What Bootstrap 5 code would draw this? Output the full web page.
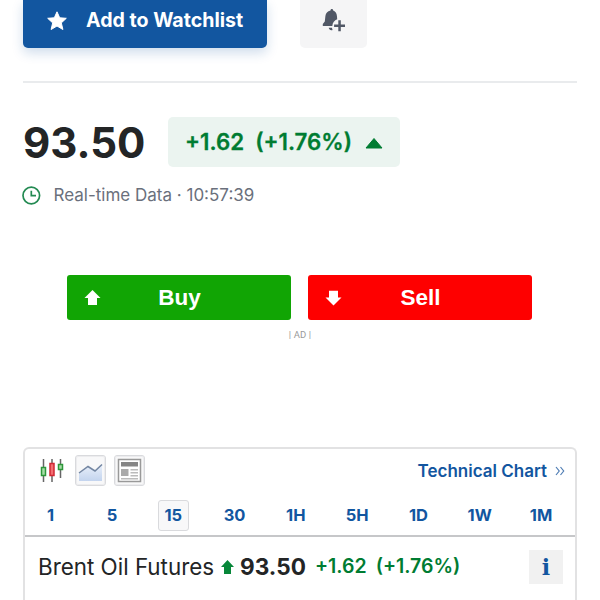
<!DOCTYPE html>
<html lang="en">
<head>
<meta charset="utf-8">
<meta name="viewport" content="width=device-width, initial-scale=1">
<title>Brent Oil Futures</title>
<link href="https://cdn.jsdelivr.net/npm/bootstrap@5.3.0/dist/css/bootstrap.min.css" rel="stylesheet">
<style>
body{font-family:Inter,"Liberation Sans",sans-serif;color:#232526;background:#fff;height:600px;overflow:hidden;line-height:1}
svg{display:block;flex:none}
.page-wrap{padding:0 23px}
.actions{height:48px;gap:33px}
.watch-btn{width:244px;border-radius:0 0 5px 5px;background:#1256a0;color:#fff;font-weight:700;font-size:19.6px;padding:0 0 7px 24px;box-shadow:0 5px 12px #1256a033}
.watch-btn span{margin-left:19px}
.bell-btn{width:67px;border-radius:0 0 5px 5px;background:#f5f5f6;padding:0 0 6px}
.divider{margin-top:33px;height:2px;background:#e9ebed}
.price-row{margin-top:34px;height:50px}
.last-price{font-size:42px;font-weight:700;width:145px;padding-top:1px}
.change-pill{width:232px;height:50px;border-radius:5px;background:#ebf4f0;color:#007c32;font-size:22.3px;font-weight:600;padding:1px 0 0 17px}
.change-pill span{-webkit-text-stroke:.3px #007c32}
.change-pill svg{margin:0 17px 0 13px}
.stamp{margin-top:18px;height:20px;font-size:17px;color:#6a707c}
.stamp svg{margin-left:-1px}
.stamp span{margin-left:12.5px}
.trade-row{margin-top:70px;gap:17px;padding:0 45px 0 44px}
.trade-btn{height:45px;border-radius:3px;color:#fff;font:700 22.5px "Liberation Sans",sans-serif;padding-left:17px}
.trade-btn span{padding:1px 33px 0 0}
.buy{background:#11a504}.sell{background:#fe0000}
.ad-label{margin-top:10px;height:10px;font:9.5px/10px Roboto,sans-serif;letter-spacing:.15px;color:#999}
.chart-box{margin-top:107px;height:170px;border:2px solid #e2e2e3;border-radius:6px 6px 0 0;border-bottom:0}
.tool-row{height:43px;padding:0 10px 0 10.5px}
.tool-icon{width:31px;height:31px;border:1px solid #d9dadd;outline:1px solid #ececee;outline-offset:-2px;border-radius:3px;background:#f8f8f9}
.tech{color:#1256a0;font-weight:600;font-size:17px;padding-top:1px}
.ranges{height:45px;padding-top:3px;color:#1256a0;font-size:16.5px;font-weight:700;border-bottom:2px solid #c6c7c9}
.range{width:61.3px;height:31px;flex:none}
.range:first-child{margin-left:-5px}
.range-on{width:31px;height:31px;border:1px solid #d9dadd;border-radius:3px;background:#f8f8f9}
.quote{height:60px;padding:0 12px 0 13px}
.quote-name{font-size:22.4px;width:183px}
.quote-last{font-size:22.6px;font-weight:700;margin-left:6px;width:75px}
.quote-chg{font-size:19.5px;font-weight:600;color:#007c32}
.quote-chg + .quote-chg{margin-left:9px}
.info{width:34px;height:34px;background:#f1f1f1;color:#1256a0;font:700 22px "DejaVu Serif",serif}
</style>
<script src="https://cdn.jsdelivr.net/npm/bootstrap@5.3.0/dist/js/bootstrap.bundle.min.js"></script>
</head>
<body>
<main class="page-wrap">
 <div class="actions d-flex">
  <button class="watch-btn border-0 d-flex align-items-center" type="button">
   <svg width="20" height="20" viewBox="0 0 20 20"><path d="M10 .8 12.7 6.8 19.3 7.3 14.3 11.9 15.9 18.5 10 15 4.1 18.5 5.7 11.9.7 7.3 7.3 6.8Z" fill="#fff" stroke="#fff" stroke-width="1" stroke-linejoin="round"/></svg>
   <span class="text-nowrap">Add to Watchlist</span>
  </button>
  <button class="bell-btn border-0 d-flex align-items-center justify-content-center" type="button" aria-label="Create alert">
   <svg width="24" height="24" viewBox="0 0 24 24" fill="#515866"><path d="M8.500 1.400c0-2 2.500-2 2.700 0 2.600 1 3.600 3 3.800 6.200l.2 2.700C12.400 11.300 10.600 13.500 10.300 17H.8v-2l2-2.500.6-5.500c.4-3 2-5 5.100-5.600ZM6.700 18.800h3.200l.7 2.200c-2 .8-3.500-.3-3.900-2.200Z"/><path d="M16.300 11.300h2.500v4.200H23V18h-4.200v4.200h-2.500V18h-4.200v-2.500h4.200Z"/></svg>
  </button>
 </div>
 <div class="divider"></div>
 <div class="price-row d-flex align-items-center">
  <div class="last-price">93.50</div>
  <div class="change-pill d-flex align-items-center"><span>+1.62</span><span class="ms-auto">(+1.76%)</span>
   <svg width="18" height="12" viewBox="0 0 18 12"><path d="M1 11 9 1.500 17 11Z" fill="#007c32" stroke="#007c32" stroke-linejoin="round"/></svg></div>
 </div>
 <div class="stamp d-flex align-items-center">
  <svg width="19" height="19" viewBox="0 0 19 19" fill="none" stroke="#238a52" stroke-width="1.700"><circle cx="9.300" cy="9.500" r="8.300"/><path d="M9.300 4.700V9.700H14"/></svg>
  <span>Real-time Data · 10:57:39</span>
 </div>
 <div class="trade-row d-flex">
  <div class="trade-btn buy flex-fill d-flex align-items-center w-50">
   <svg width="17" height="16" viewBox="0 0 17 16"><path d="M8.500 0 16.500 8H13V15H4V8H.5Z" fill="#fff"/></svg><span class="flex-fill text-center">Buy</span></div>
  <div class="trade-btn sell flex-fill d-flex align-items-center w-50">
   <svg width="17" height="16" viewBox="0 0 17 16"><path d="M8.500 15.500 16.500 7.500H13V.8H4V7.500H.5Z" fill="#fff"/></svg><span class="flex-fill text-center">Sell</span></div>
 </div>
 <div class="ad-label text-center">| AD |</div>
 <section class="chart-box">
  <div class="tool-row d-flex align-items-center">
   <svg width="31" height="31" viewBox="0 0 31 31"><path d="M7.500 4v23M16 4v23M24.500 4v19" stroke="#666" stroke-width="1.500"/><path d="M5.500 12.500h4v8h-4ZM22.500 9.500h4v5h-4Z" fill="#a9dda9" stroke="#2d963a" stroke-width="1.500"/><path d="M14 8.500h4v12h-4Z" fill="#f36e72" stroke="#d02834" stroke-width="1.500"/></svg>
   <span class="tool-icon ms-2"><svg width="29" height="29" viewBox="0 0 29 29"><defs><linearGradient id="area" x2="0" y2="1"><stop stop-color="#e8effa"/><stop offset="1" stop-color="#c3d4ee"/></linearGradient></defs><path d="M3 17 12 11 19 15 26 9V25H3Z" fill="url(#area)"/><path d="M3 17 12 10.500 19 15 26 8.500" fill="none" stroke="#7386a2" stroke-width="1.500"/></svg></span>
   <span class="tool-icon ms-2"><svg width="29" height="29" viewBox="0 0 29 29"><path d="M3.500 3.500h22v22h-22Z" fill="#fff" stroke="#999" stroke-width="1.500"/><path d="M6 6h17v4.500H6Z" fill="#858585"/><path d="M6 13h7.500v7H6Z" fill="#aaa"/><path d="M15.500 13.700H23M15.500 16.700H23M15.500 19.700H23M6 22.700H23" stroke="#bbb" stroke-width="1.500"/></svg></span>
   <span class="tech ms-auto">Technical Chart</span>
   <svg class="ms-2" width="10" height="10" viewBox="0 0 10 10"><path d="M1 1 4.200 5 1 9M5.500 1 8.700 5 5.500 9" fill="none" stroke="#4f7db4" stroke-width="1.200"/></svg>
  </div>
  <div class="ranges d-flex align-items-center">
   <span class="range d-flex align-items-center justify-content-center">1</span>
   <span class="range d-flex align-items-center justify-content-center">5</span>
   <span class="range d-flex align-items-center justify-content-center"><span class="range-on d-flex align-items-center justify-content-center">15</span></span>
   <span class="range d-flex align-items-center justify-content-center">30</span>
   <span class="range d-flex align-items-center justify-content-center">1H</span>
   <span class="range d-flex align-items-center justify-content-center">5H</span>
   <span class="range d-flex align-items-center justify-content-center">1D</span>
   <span class="range d-flex align-items-center justify-content-center">1W</span>
   <span class="range d-flex align-items-center justify-content-center">1M</span>
  </div>
  <div class="quote d-flex align-items-center">
   <span class="quote-name text-nowrap">Brent Oil Futures</span>
   <svg width="13" height="14" viewBox="0 0 13 14"><path d="M6.500 0 13 7H10V14H3V7H0Z" fill="#078739"/></svg>
   <span class="quote-last">93.50</span>
   <span class="quote-chg">+1.62</span><span class="quote-chg">(+1.76%)</span>
   <span class="info ms-auto d-flex align-items-center justify-content-center">i</span>
  </div>
 </section>
</main>
</body>
</html>
